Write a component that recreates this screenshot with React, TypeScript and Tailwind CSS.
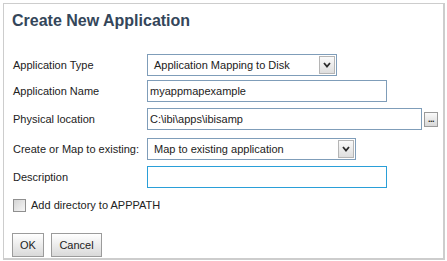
import React from "react";

const font = { fontFamily: '"Liberation Sans", Arial, sans-serif' };

function Chevron() {
  return (
    <svg width="8" height="6" viewBox="0 0 8 6" className="block">
      <path d="M1 1 L4 4.5 L7 1" fill="none" stroke="#2b2b2b" strokeWidth="1.8" />
    </svg>
  );
}

function Select({ value, width }: { value: string; width: string }) {
  return (
    <div className={`${width} h-[22px] border border-[#7f9db9] bg-white flex items-center justify-between pl-[6px] pr-[1px]`}>
      <span className="text-[11px] text-[#222] whitespace-nowrap">{value}</span>
      <div className="w-[16px] h-[18px] border border-[#b5b5b5] bg-gradient-to-b from-[#fafafa] to-[#dedede] flex items-center justify-center">
        <Chevron />
      </div>
    </div>
  );
}

function Field({ value, width, focus }: { value?: string; width: string; focus?: boolean }) {
  return (
    <div
      className={`${width} h-[22px] border ${focus ? "border-[#2a9fd8]" : "border-[#7f9db9]"} bg-white flex items-center pl-[2px]`}
    >
      <span className="text-[11px] text-[#222] whitespace-nowrap">{value}</span>
    </div>
  );
}

function Row({ label, children, mt }: { label: string; children: React.ReactNode; mt: string }) {
  return (
    <div className={`flex items-center ${mt}`}>
      <div className="w-[134px] text-[11px] text-[#222] whitespace-nowrap">{label}</div>
      {children}
    </div>
  );
}

export default function App() {
  return (
    <div className="w-[447px] h-[261px] bg-white pt-[3px] pl-[3px]" style={font}>
      <div className="w-[442px] h-[257px] border border-[#cdcdcd] border-r-2 border-b-2 bg-white">
        <div className="pt-[7px] pl-[8px] text-[16px] leading-[19px] font-bold text-[#34465a]">
          Create New Application
        </div>
        <div className="pl-[9px] mt-[24px]">
          <Row label="Application Type" mt="mt-0">
            <Select value="Application Mapping to Disk" width="w-[190px]" />
          </Row>
          <Row label="Application Name" mt="mt-[4px]">
            <Field value="myappmapexample" width="w-[240px]" />
          </Row>
          <Row label="Physical location" mt="mt-[6px]">
            <Field value="C:\ibi\apps\ibisamp" width="w-[275px]" />
            <div className="ml-[2px] w-[14px] h-[15px] border border-[#9a9a9a] bg-gradient-to-b from-[#fafafa] to-[#d8d8d8] flex items-end justify-center pb-[2px]">
              <span className="text-[9px] leading-[9px] text-[#222] font-bold tracking-[-0.5px]">...</span>
            </div>
          </Row>
          <Row label="Create or Map to existing:" mt="mt-[8px]">
            <Select value="Map to existing application" width="w-[209px]" />
          </Row>
          <Row label="Description" mt="mt-[6px]">
            <Field width="w-[240px]" focus />
          </Row>
          <div className="flex items-center h-[13px] mt-[11px]">
            <div className="w-[13px] h-[13px] border border-[#8f8f8f] bg-gradient-to-br from-[#d4d4d4] to-[#f6f6f6]" />
            <span className="ml-[5px] text-[11px] leading-[13px] text-[#222]">Add directory to APPPATH</span>
          </div>
        </div>
        <div className="flex pl-[8px] mt-[21px] gap-[7px]">
          <div className="w-[32px] h-[24px] border border-[#9b9b9b] bg-gradient-to-b from-[#ffffff] to-[#d9d9d9] flex items-center justify-center text-[11px] text-[#222]">
            OK
          </div>
          <div className="w-[51px] h-[24px] border border-[#9b9b9b] bg-gradient-to-b from-[#ffffff] to-[#d9d9d9] flex items-center justify-center text-[11px] text-[#222]">
            Cancel
          </div>
        </div>
      </div>
    </div>
  );
}
